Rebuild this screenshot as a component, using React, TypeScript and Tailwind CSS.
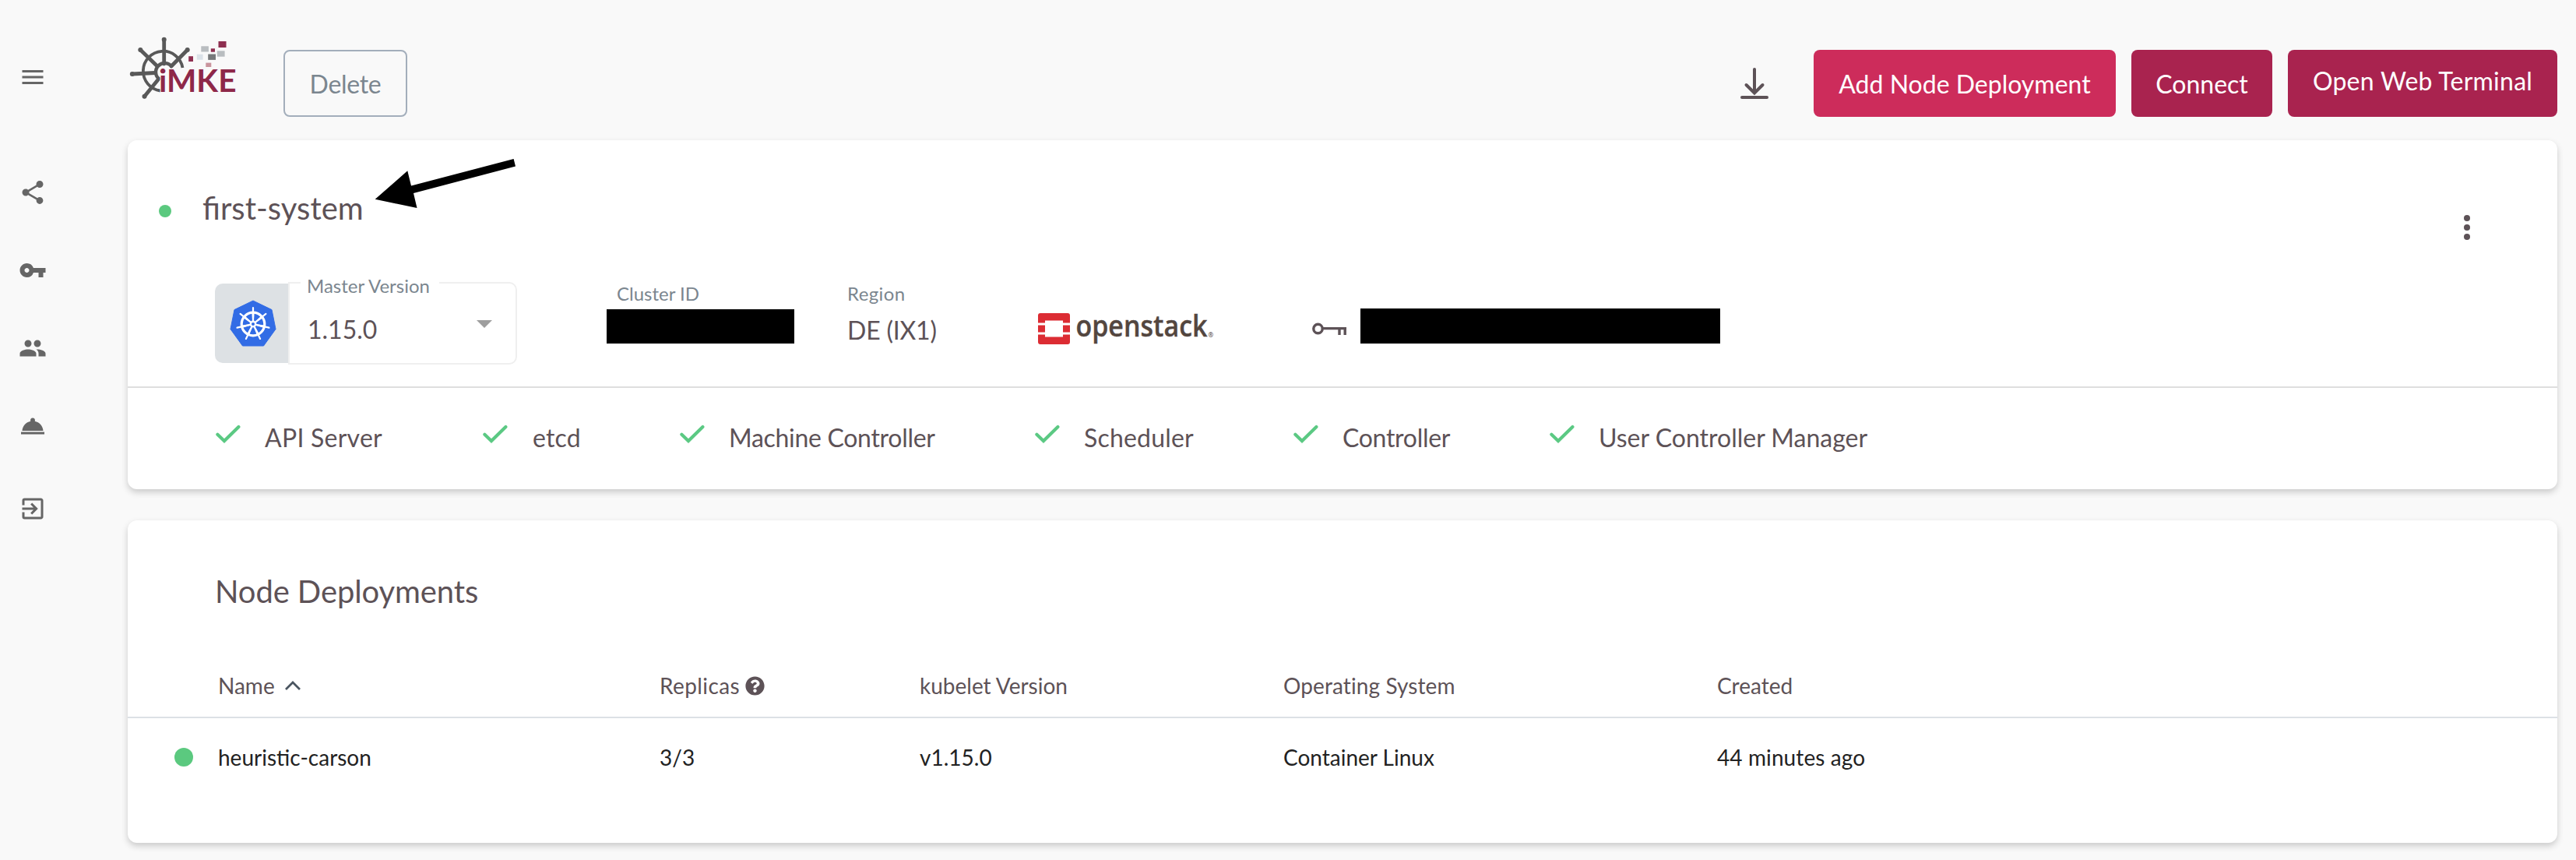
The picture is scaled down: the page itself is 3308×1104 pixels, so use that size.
import React from "react";
import { MdExitToApp, MdMenu, MdPeople, MdRoomService, MdShare, MdVpnKey } from "react-icons/md";
import { FaQuestionCircle } from "react-icons/fa";

function ImkeLogo() {
  return (
    <svg width="140" height="88" viewBox="164 44 140 88" className="shrink-0 overflow-visible">
      <g stroke="#595959" fill="none">
        <path d="M 206 116.5 A 25.5 25.5 0 1 1 234.5 87" strokeWidth="3.8" />
        <path d="M 205 102 A 11.5 11.5 0 1 1 221 86" strokeWidth="4.4" />
      </g>
      <g stroke="#595959" strokeLinecap="round">
        {[
          [210.7, 50.8, 210.7, 82],
          [240.7, 64, 220, 85],
          [180.3, 64, 202, 85],
          [169.8, 95, 199, 93.5],
          [185.5, 123.8, 204, 101],
        ].map(([a, b, c, d]) => (
          <g key={`${a}-${b}`}>
            <line x1={a} y1={b} x2={c} y2={d} strokeWidth="4.8" />
            <circle cx={a} cy={b} r="3" fill="#595959" stroke="none" />
          </g>
        ))}
      </g>
      <rect x="280.5" y="53" width="10" height="8" fill="#8e2f50" />
      <rect x="258.3" y="59.3" width="9.6" height="7.2" fill="#b9bdc0" />
      <rect x="270.8" y="62.3" width="5.2" height="4.4" fill="#8e2f50" />
      <rect x="278.8" y="65.3" width="9.8" height="7.4" fill="#b9bdc0" />
      <rect x="267.2" y="69.5" width="9.8" height="7.4" fill="#77797b" />
      <rect x="252.8" y="69.7" width="7.8" height="7" fill="#dbe2e8" />
      <rect x="242.2" y="72.2" width="5.8" height="6.8" fill="#8e2f50" />
      <rect x="264.3" y="80.6" width="7" height="5.4" fill="#c9949d" />
      <text
        x="204"
        y="118"
        textLength="99.5"
        lengthAdjust="spacingAndGlyphs"
        className="font-['Lato',sans-serif] text-[41px] font-bold"
        fill="#8e2849"
        stroke="#f9f9f9"
        strokeWidth="2"
        paintOrder="stroke"
      >
        iMKE
      </text>
    </svg>
  );
}

function KubernetesMark() {
  const spokes = [0, 1, 2, 3, 4, 5, 6].map((i) => (i * 360) / 7);
  return (
    <svg width="60" height="60" viewBox="0 0 60 60">
      <path
        d="M30 1 L54 12.6 L59 37.5 L43.5 59 H16.5 L1 37.5 L6 12.6 Z"
        fill="#326ce5"
        stroke="#326ce5"
        strokeWidth="1"
        strokeLinejoin="round"
      />
      <g transform="translate(30 31)">
        <circle r="14.8" fill="none" stroke="#fff" strokeWidth="3.2" />
        {spokes.map((a) => (
          <g key={a} transform={`rotate(${a})`}>
            <line y1="-4" y2="-21" stroke="#fff" strokeWidth="2.2" strokeLinecap="round" />
            <path d="M-1.6 -14 L-0.8 -3 H0.8 L1.6 -14 Z" fill="#fff" />
          </g>
        ))}
        <circle r="4.4" fill="#fff" />
        <circle r="2" fill="#326ce5" />
      </g>
    </svg>
  );
}

function OpenStackLogo() {
  return (
    <svg width="228" height="48" viewBox="0 0 228 48" className="block overflow-visible">
      <path d="M3 0 H38 Q41 0 41 3 V12.6 H32 V9.5 H9 V12.6 H0 V3 Q0 0 3 0 Z" fill="#dc2c33" />
      <path d="M0 15.4 H9 V24.4 H0 Z M32 15.4 H41 V24.4 H32 Z" fill="#dc2c33" />
      <path d="M0 27.4 H9 V30.5 H32 V27.4 H41 V37 Q41 40 38 40 H3 Q0 40 0 37 Z" fill="#dc2c33" />
      <text
        x="48.5"
        y="30"
        textLength="169"
        lengthAdjust="spacingAndGlyphs"
        className="font-['Open_Sans',sans-serif] text-[38px] font-semibold"
        fill="#53463f"
        stroke="#53463f"
        strokeWidth="0.4"
      >
        openstack
      </text>
      <text x="218.5" y="30.5" className="font-['Open_Sans',sans-serif] text-[8px] font-semibold" fill="#53463f">
        ®
      </text>
    </svg>
  );
}

function Check() {
  return (
    <svg width="32" height="24" viewBox="0 0 32 24" className="mt-[5px] shrink-0">
      <path d="M2.4 12.8 L11 21 L29.4 3" fill="none" stroke="#5bc983" strokeWidth="4.2" strokeLinecap="round" />
    </svg>
  );
}

const health = [
  { name: "API Server", cls: "tracking-[0.25px]" },
  { name: "etcd", cls: "pl-px tracking-[0.2px]" },
  { name: "Machine Controller", cls: "tracking-[-0.3px]" },
  { name: "Scheduler", cls: "tracking-[0.2px]" },
  { name: "Controller", cls: "tracking-[-0.3px]" },
  { name: "User Controller Manager", cls: "" },
];

export default function App() {
  return (
    <div className="flex h-[1104px] w-full overflow-hidden bg-[#f9f9f9] font-['Lato',sans-serif] text-[32px] text-[#5d5257]">
      <nav className="flex w-[84px] shrink-0 flex-col items-center pt-[81px] text-[36px] text-[#666]">
        <MdMenu className="mb-28" />
        <div className="flex flex-col gap-16">
          <MdShare />
          <MdVpnKey />
          <MdPeople />
          <MdRoomService />
        </div>
        <MdExitToApp className="mt-[70px]" />
      </nav>

      <main className="flex min-w-0 flex-1 flex-col pr-6 pl-20">
        <header className="flex h-[180px] shrink-0 items-start pt-11">
          <ImkeLogo />
          <button className="mt-5 ml-[60px] h-[86px] w-[159px] rounded-lg border-2 border-[#a3aebb] pt-0.5 text-[#7b868f] tracking-[-0.3px]">
            Delete
          </button>
          <svg width="40" height="44" viewBox="0 0 40 44" className="mt-[41px] ml-auto" fill="none" stroke="#5d5257" strokeWidth="4" strokeLinecap="round">
            <path d="M20 4 V34 M9.5 24 L20 34.5 L30.5 24" />
            <path d="M4 40 H36" />
          </svg>
          <div className="mt-5 ml-14 flex gap-5 text-white">
            <button className="h-[86px] w-[388px] rounded-lg bg-[#cd2c5b] pt-0.5">Add Node Deployment</button>
            <button className="h-[86px] w-[181px] rounded-lg bg-[#a9234f] pt-0.5">Connect</button>
            <button className="h-[86px] w-[346px] rounded-lg bg-[#a9234f] pb-1.5 tracking-[0.25px]">Open Web Terminal</button>
          </div>
        </header>

        <section className="relative h-[448px] shrink-0 rounded-xl bg-white shadow-[0_4px_9px_rgba(0,0,0,0.19)]">
          <div className="flex h-[316px] flex-col border-b-2 border-transparent pt-[61px]">
            <div className="flex h-12 items-start">
              <span className="mt-[22px] ml-10 size-4 rounded-full bg-[#5bc97f]" />
              <h1 className="mt-0.5 ml-10 text-[40px] leading-[48px]">first-system</h1>
              <svg width="8" height="32" viewBox="0 0 8 32" className="mt-[35px] mr-28 ml-auto" fill="#5d5257">
                <circle cx="4" cy="4" r="4" />
                <circle cx="4" cy="16" r="4" />
                <circle cx="4" cy="28" r="4" />
              </svg>
            </div>

            <div className="mt-[61px] flex items-start">
              <div className="mt-3 ml-28 flex items-start">
                <div className="mt-0.5 flex h-[102px] w-[94px] items-center justify-center rounded-l-[10px] bg-[#dde1e4] pl-[3px]">
                  <KubernetesMark />
                </div>
                <div className="relative flex h-[106px] w-[294px] items-center justify-between rounded-r-[10px] border-2 border-[#efefef] pr-[30px] pl-[23px]">
                  <span className="absolute -top-[11px] left-[14px] w-[178px] bg-white pl-2 text-[24px] leading-7 text-[#7b868f]">
                    Master Version
                  </span>
                  <span className="pt-4 leading-10">1.15.0</span>
                  <svg width="20" height="10" viewBox="0 0 20 10" className="mt-0.5">
                    <path d="M0 0 H20 L10 10 Z" fill="#9e9e9e" />
                  </svg>
                </div>
              </div>

              <div className="mt-3 ml-[115px]">
                <div className="pl-[13px] text-[24px] leading-[30px] text-[#7b868f]">Cluster ID</div>
                <div className="mt-[5px] h-11 w-[241px] bg-black" />
              </div>

              <div className="mt-3 ml-[68px] w-[245px]">
                <div className="text-[24px] leading-[30px] tracking-[0.4px] text-[#7b868f]">Region</div>
                <div className="mt-3 leading-10 tracking-[-0.2px]">DE (IX1)</div>
              </div>

              <div className="mt-[52px] w-[352px]">
                <OpenStackLogo />
              </div>

              <svg width="44" height="17" viewBox="0 0 44 17" className="mt-16" fill="none" stroke="#5d5257">
                <circle cx="7.5" cy="8" r="5.7" strokeWidth="3.4" />
                <path d="M13.5 7.6 H44 M35 8 V16 M42.2 8 V16" strokeWidth="3.4" />
              </svg>
              <div className="mt-[46px] ml-[18px] h-[45px] w-[462px] bg-black" />
            </div>
          </div>

          <div className="grid grid-cols-[343px_253px_456px_332px_329px_auto] border-t-2 border-[#dedede] pt-[42px] pl-[113px]">
            {health.map((h) => (
              <div key={h.name} className="flex items-start">
                <Check />
                <span className={`mt-0.5 ml-[31px] leading-10 whitespace-nowrap ${h.cls}`}>{h.name}</span>
              </div>
            ))}
          </div>

          <svg width="184" height="68" viewBox="480 200 184 68" className="absolute top-5 left-[316px]">
            <path d="M481.7 255.7 L523.3 219.3 L528 238.6 L659.6 204 L662 213.6 L531 248 L535.5 267 Z" fill="#000" />
          </svg>
        </section>

        <section className="mt-10 h-[414px] shrink-0 rounded-xl bg-white pt-[67px] shadow-[0_4px_9px_rgba(0,0,0,0.19)]">
          <h2 className="pl-28 text-[40px] leading-[48px] tracking-[-0.1px]">Node Deployments</h2>
          <div className="mt-[77px] grid grid-cols-[116px_567px_334px_467px_557px_1fr] border-b-2 border-[#dce1e5] pb-5 text-[28px] leading-10">
            <span />
            <div className="flex items-center">
              Name
              <svg width="22" height="14" viewBox="0 0 22 14" className="ml-3" fill="none" stroke="#4a5560" strokeWidth="2.8">
                <path d="M2 12 L11 3 L20 12" />
              </svg>
            </div>
            <div className="flex items-center tracking-[0.4px]">
              Replicas
              <FaQuestionCircle className="ml-[7px] text-[25px]" />
            </div>
            <span>kubelet Version</span>
            <span className="tracking-[0.1px]">Operating System</span>
            <span>Created</span>
          </div>
          <div className="grid grid-cols-[116px_567px_334px_467px_557px_1fr] pt-[30px] text-[28px] leading-10 text-[#222]">
            <div className="flex items-center pl-[60px]">
              <span className="size-6 rounded-full bg-[#5bc97f]" />
            </div>
            <span>heuristic-carson</span>
            <span>3/3</span>
            <span>v1.15.0</span>
            <span>Container Linux</span>
            <span className="tracking-[0.1px]">44 minutes ago</span>
          </div>
        </section>
      </main>
    </div>
  );
}
